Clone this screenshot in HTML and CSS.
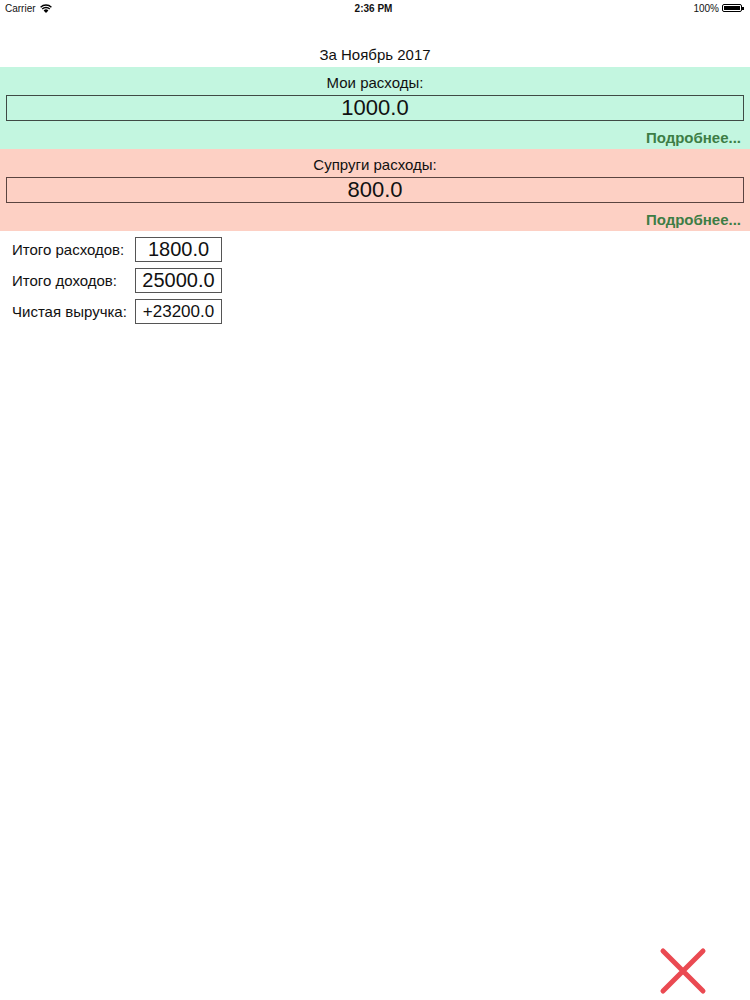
FILE: index.html
```html
<!DOCTYPE html>
<html>
<head>
    <title>Расходы за месяц</title>
    <link rel="stylesheet" href="styles.css">
</head>
<body>
    <div class="statusbar">
        <div class="status-left">
            Carrier
            <svg class="wifi" width="12" height="9" viewBox="0 0 12 9">
                <path d="M6 9 L3.6 6.4 A3.4 3.4 0 0 1 8.4 6.4 Z" fill="#000"/>
                <path d="M2.2 5 A5.4 5.4 0 0 1 9.8 5" stroke="#000" stroke-width="1.4" fill="none"/>
                <path d="M0.6 3.2 A7.8 7.8 0 0 1 11.4 3.2" stroke="#000" stroke-width="1.4" fill="none"/>
            </svg>
        </div>
        <div class="status-time">2:36 PM</div>
        <div class="status-right">
            100%
            <span class="battery"><span class="battery-level"></span></span>
        </div>
    </div>

    <div class="title">За Ноябрь 2017</div>

    <div class="panel mine">
        <div class="panel-caption">Мои расходы:</div>
        <div class="amount">1000.0</div>
        <a class="more" href="#">Подробнее...</a>
    </div>

    <div class="panel spouse">
        <div class="panel-caption">Супруги расходы:</div>
        <div class="amount">800.0</div>
        <a class="more" href="#">Подробнее...</a>
    </div>

    <div class="totals">
        <div class="total-label">Итого расходов:</div>
        <div class="total-value">1800.0</div>
        <div class="total-label">Итого доходов:</div>
        <div class="total-value">25000.0</div>
        <div class="total-label">Чистая выручка:</div>
        <!-- long value gets shrunk to fit the box -->
        <div class="total-value shrink">+23200.0</div>
    </div>

    <!-- close button -->
    <button class="close">
        <svg width="50" height="50" viewBox="0 0 50 50">
            <path d="M5 5 L45 45 M45 5 L5 45" stroke="#ea4a52" stroke-width="5" stroke-linecap="round"/>
        </svg>
    </button>
</body>
</html>
```

FILE: styles.css
```css
body { margin: 0; font-family: "Liberation Sans", Arial, sans-serif; background: white; color: #111; width: 750px; height: 1000px; position: relative; overflow: hidden; }

.statusbar { height: 20px; display: flex; align-items: center; justify-content: space-between; padding: 0 8px 4px 5px; font-size: 10px; box-sizing: border-box; }
.status-left { display: flex; align-items: center; gap: 4px; width: 120px; }
.status-time { font-weight: bold; }
.status-right { display: flex; align-items: center; justify-content: flex-end; gap: 3px; width: 120px; }
.battery { display: inline-block; width: 20px; height: 8px; border: 1px solid #000; border-radius: 2px; padding: 1px; box-sizing: border-box; position: relative; }
.battery::after { content: ""; position: absolute; right: -3px; top: 2px; width: 2px; height: 3px; background: #000; }
.battery-level { display: block; width: 100%; height: 100%; background: #000; }

.title { text-align: center; font-size: 15px; line-height: 17px; padding: 26px 0 4px; }

.panel { display: flex; flex-direction: column; padding: 7px 6px 3px; }
.mine { background: #c3f6e0; }
.spouse { background: #fdd0c4; }
.panel-caption { text-align: center; font-size: 15px; line-height: 17px; }
.amount { margin-top: 4px; height: 26px; box-sizing: border-box; border: 1px solid #3f4a45; text-align: center; font-size: 22px; line-height: 24px; }
.spouse .amount { border-color: #5a4440; }
.more { align-self: flex-end; margin: 8px 3px 0 0; font-size: 15px; line-height: 17px; font-weight: bold; color: #3d7d45; text-decoration: none; }

.totals { display: grid; grid-template-columns: 117px 87px; row-gap: 6px; column-gap: 6px; align-items: center; padding: 6px 0 0 12px; }
.total-label { font-size: 15px; }
.total-value { height: 25px; box-sizing: border-box; border: 1px solid #555; text-align: center; font-size: 20px; line-height: 23px; }
.total-value.shrink { font-size: 17px; }

.close { position: absolute; left: 658px; top: 946px; padding: 0; border: none; background: none; cursor: pointer; }
.close svg { display: block; }
```
